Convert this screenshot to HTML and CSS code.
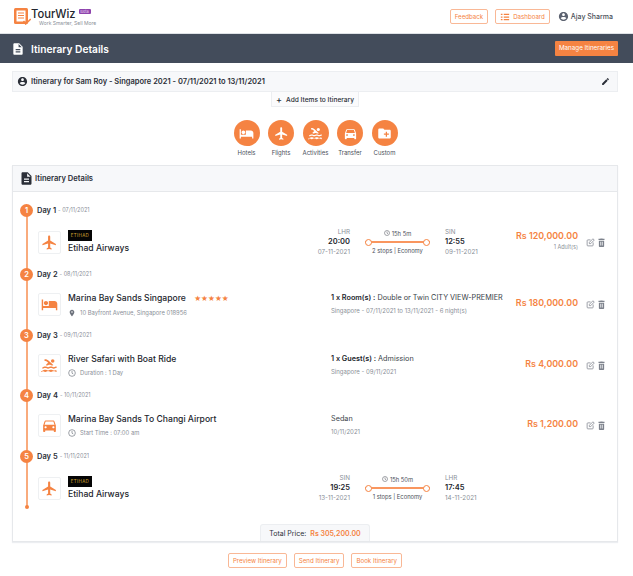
FILE: index.html
```html
<!DOCTYPE html>
<html lang="en">

<head>
  <meta charset="UTF-8" />
  <title>TourWiz - Itinerary Details</title>
  <link rel="stylesheet" href="styles.css">
</head>

<body>
  <svg class="defs" width="0" height="0">
    <symbol id="i-plane" viewBox="0 0 24 24"><path d="M21 16v-2l-8-5V3.5c0-.83-.67-1.5-1.5-1.5S10 2.67 10 3.5V9l-8 5v2l8-2.5V19l-2 1.5V22l3.5-1 3.5 1v-1.5L13 19v-5.5l8 2.5z"/></symbol>
    <symbol id="i-hotel" viewBox="0 0 24 24"><path d="M7 13c1.66 0 3-1.34 3-3S8.66 7 7 7s-3 1.34-3 3 1.34 3 3 3zm12-6h-8v7H3V5H1v15h2v-3h18v3h2v-9c0-2.21-1.79-4-4-4z"/></symbol>
    <symbol id="i-pool" viewBox="0 0 24 24"><path d="M2 21v-2c2 0 2-1 4-1s2 1 4 1 2-1 4-1 2 1 4 1 2-1 4 0v2c-2 0-2-1-4-1s-2 1-4 1-2-1-4-1-2 1-4 1-2-1-4-1-2 1-4 1zm0-4.500v-2c2 0 2-1 4-1s2 1 4 1 2-1 4-1 2 1 4 1 2-1 4-1v2c-2 0-2 1-4 1s-2-1-4-1-2 1-4 1-2-1-4-1-2 1-4 1zM8.700 12c1.500 0 2-1 3.300-1s2 1 3.300 1 1.700-.4 2.100-.6L10.500 5C8.900 3.500 7.500 3 5 3v2.500c1.800 0 2.900.4 4 1.500l1 1-3.200 3.200c.8.400 1.100.8 1.900.8z"/><circle cx="16.500" cy="5.500" r="2.500"/></symbol>
    <symbol id="i-car" viewBox="0 0 24 24"><path d="M18.920 6.010C18.720 5.420 18.160 5 17.500 5h-11c-.66 0-1.210.42-1.420 1.010L3 12v8c0 .55.45 1 1 1h1c.55 0 1-.45 1-1v-1h12v1c0 .55.45 1 1 1h1c.55 0 1-.45 1-1v-8l-2.080-5.990zM6.500 16c-.83 0-1.500-.67-1.500-1.500S5.670 13 6.500 13s1.500.67 1.500 1.500S7.330 16 6.500 16zm11 0c-.83 0-1.500-.67-1.500-1.500s.67-1.500 1.500-1.500 1.500.67 1.500 1.500-.67 1.500-1.500 1.500zM5 11l1.500-4.500h11L19 11H5z"/></symbol>
    <symbol id="i-folder" viewBox="0 0 24 24"><path d="M20 6h-8l-2-2H4c-1.100 0-2 .9-2 2v12c0 1.100.9 2 2 2h16c1.100 0 2-.9 2-2V8c0-1.100-.9-2-2-2zm-1 8h-3v3h-2v-3h-3v-2h3V9h2v3h3v2z"/></symbol>
    <symbol id="i-user" viewBox="0 0 24 24"><path d="M12 2C6.480 2 2 6.480 2 12s4.480 10 10 10 10-4.480 10-10S17.520 2 12 2zm0 3c1.660 0 3 1.340 3 3s-1.340 3-3 3-3-1.340-3-3 1.340-3 3-3zm0 14.200c-2.500 0-4.710-1.280-6-3.220.03-1.990 4-3.080 6-3.080 1.990 0 5.970 1.090 6 3.080-1.290 1.940-3.500 3.220-6 3.220z"/></symbol>
    <symbol id="i-doc" viewBox="0 0 24 24"><path d="M14 2H6c-1.100 0-1.990.9-1.990 2L4 20c0 1.100.89 2 1.990 2H18c1.100 0 2-.9 2-2V8l-6-6zm2 16H8v-2h8v2zm0-4H8v-2h8v2zm-3-5V3.500L18.500 9H13z"/></symbol>
    <symbol id="i-pencil" viewBox="0 0 24 24"><path d="M3 17.250V21h3.750L17.810 9.940l-3.750-3.750L3 17.250zM20.710 7.040c.39-.39.39-1.020 0-1.410l-2.340-2.340c-.39-.39-1.020-.39-1.410 0l-1.830 1.830 3.750 3.750 1.830-1.830z"/></symbol>
    <symbol id="i-edit" viewBox="0 0 24 24"><path d="M12 5H5a2 2 0 0 0-2 2v12a2 2 0 0 0 2 2h12a2 2 0 0 0 2-2v-7" fill="none" stroke="currentColor" stroke-width="2"/><path d="M9 15v-3.500L18.500 2 22 5.500 12.500 15z" fill="none" stroke="currentColor" stroke-width="2"/></symbol>
    <symbol id="i-trash" viewBox="0 0 24 24"><path d="M5 22c0 1.100.9 2 2 2h10c1.100 0 2-.9 2-2V7H5v15zm4-12h2v10H9V10zm4 0h2v10h-2V10zM20 2h-4.500l-1-1h-5l-1 1H4v3h16V2z"/></symbol>
    <symbol id="i-pin" viewBox="0 0 24 24"><path d="M12 2C8.130 2 5 5.130 5 9c0 5.250 7 13 7 13s7-7.750 7-13c0-3.870-3.130-7-7-7zm0 9.500c-1.380 0-2.500-1.120-2.500-2.500s1.120-2.500 2.500-2.500 2.500 1.120 2.500 2.500-1.120 2.500-2.500 2.500z"/></symbol>
    <symbol id="i-clock" viewBox="0 0 24 24"><circle cx="12" cy="12" r="10" fill="none" stroke="currentColor" stroke-width="2"/><path d="M12 6v6.500l4 2.500" fill="none" stroke="currentColor" stroke-width="2"/></symbol>
    <symbol id="i-list" viewBox="0 0 24 24"><path d="M2 4h4v3H2zM9 4h13v3H9zM2 10.500h4v3H2zM9 10.500h13v3H9zM2 17h4v3H2zM9 17h13v3H9z"/></symbol>
  </svg>

  <header class="topbar">
    <div class="brand">
      <svg class="brand-logo" viewBox="0 0 17 17">
        <rect x="0" y="0" width="14" height="16" rx="1.500" fill="#f58342"/>
        <path d="M2.500 2.500h9v11h-9z" fill="#fff"/>
        <path d="M4 5h6M4 7.500h6M4 10h6" stroke="#f58342" stroke-width="1.200"/>
        <path d="M9.500 13l2.200 3 5-5" fill="none" stroke="#f58342" stroke-width="1.500"/>
      </svg>
      <div class="brand-text">
        <div class="brand-name">TourWiz <span class="beta">Beta</span></div>
        <div class="brand-tag">Work Smarter, Sell More</div>
      </div>
    </div>
    <div class="topbar-right">
      <a class="btn-outline btn-top">Feedback</a>
      <a class="btn-outline btn-top btn-dash"><svg class="ic-list"><use href="#i-list"/></svg>Dashboard</a>
      <div class="user"><svg class="ic-user"><use href="#i-user"/></svg>Ajay Sharma</div>
    </div>
  </header>

  <div class="pagebar">
    <div class="pagebar-title"><svg class="ic-page"><use href="#i-doc"/></svg>Itinerary Details</div>
    <a class="btn-manage">Manage Itineraries</a>
  </div>

  <main class="content">
    <div class="title-bar">
      <div class="title-left"><svg class="ic-title"><use href="#i-user"/></svg>Itinerary for Sam Roy - Singapore 2021 - 07/11/2021 to 13/11/2021</div>
      <svg class="ic-pencil"><use href="#i-pencil"/></svg>
    </div>
    <div class="add-wrap"><a class="add-btn"><span class="plus">+</span>Add Items to Itinerary</a></div>

    <div class="types">
      <div class="type"><span class="type-circle"><svg><use href="#i-hotel"/></svg></span>Hotels</div>
      <div class="type"><span class="type-circle"><svg><use href="#i-plane"/></svg></span>Flights</div>
      <div class="type"><span class="type-circle"><svg><use href="#i-pool"/></svg></span>Activities</div>
      <div class="type"><span class="type-circle"><svg><use href="#i-car"/></svg></span>Transfer</div>
      <div class="type"><span class="type-circle"><svg><use href="#i-folder"/></svg></span>Custom</div>
    </div>

    <section class="card">
      <div class="card-head"><svg class="ic-head"><use href="#i-doc"/></svg>Itinerary Details</div>

      <div class="timeline">
        <div class="day day-flight">
          <div class="day-head"><span class="num">1</span><b>Day 1</b><span class="day-date">- 07/11/2021</span></div>
          <div class="item item-flight">
            <span class="item-icon"><svg><use href="#i-plane"/></svg></span>
            <div class="info">
              <div class="airline-logo">ETIHAD</div>
              <div class="item-title">Etihad Airways</div>
            </div>
            <div class="flight">
              <div class="leg leg-from"><span class="code">LHR</span><b>20:00</b><span class="code">07-11-2021</span></div>
              <div class="route">
                <span class="dur"><svg class="ic-dur"><use href="#i-clock"/></svg>15h 5m</span>
                <span class="line"></span>
                <span class="stops">2 stops | Economy</span>
              </div>
              <div class="leg"><span class="code">SIN</span><b>12:55</b><span class="code">09-11-2021</span></div>
            </div>
            <div class="price">Rs 120,000.00<small>1 Adult(s)</small></div>
            <div class="actions"><svg><use href="#i-edit"/></svg><svg><use href="#i-trash"/></svg></div>
          </div>
        </div>

        <div class="day">
          <div class="day-head"><span class="num">2</span><b>Day 2</b><span class="day-date">- 08/11/2021</span></div>
          <div class="item">
            <span class="item-icon"><svg><use href="#i-hotel"/></svg></span>
            <div class="info">
              <div class="item-title">Marina Bay Sands Singapore <span class="stars">★★★★★</span></div>
              <div class="item-sub"><svg class="ic-sub"><use href="#i-pin"/></svg>10 Bayfront Avenue, Singapore 018956</div>
            </div>
            <div class="detail">
              <div class="detail-main"><b>1 x Room(s) :</b> Double or Twin CITY VIEW-PREMIER</div>
              <div class="detail-sub">Singapore - 07/11/2021 to 13/11/2021 - 6 night(s)</div>
            </div>
            <div class="price">Rs 180,000.00</div>
            <div class="actions"><svg><use href="#i-edit"/></svg><svg><use href="#i-trash"/></svg></div>
          </div>
        </div>

        <div class="day day-short">
          <div class="day-head"><span class="num">3</span><b>Day 3</b><span class="day-date">- 09/11/2021</span></div>
          <div class="item">
            <span class="item-icon"><svg><use href="#i-pool"/></svg></span>
            <div class="info">
              <div class="item-title">River Safari with Boat Ride</div>
              <div class="item-sub"><svg class="ic-sub"><use href="#i-clock"/></svg>Duration : 1 Day</div>
            </div>
            <div class="detail">
              <div class="detail-main"><b>1 x Guest(s) :</b> Admission</div>
              <div class="detail-sub">Singapore - 09/11/2021</div>
            </div>
            <div class="price">Rs 4,000.00</div>
            <div class="actions"><svg><use href="#i-edit"/></svg><svg><use href="#i-trash"/></svg></div>
          </div>
        </div>

        <div class="day">
          <div class="day-head"><span class="num">4</span><b>Day 4</b><span class="day-date">- 10/11/2021</span></div>
          <div class="item">
            <span class="item-icon"><svg><use href="#i-car"/></svg></span>
            <div class="info">
              <div class="item-title">Marina Bay Sands To Changi Airport</div>
              <div class="item-sub"><svg class="ic-sub"><use href="#i-clock"/></svg>Start Time : 07:00 am</div>
            </div>
            <div class="detail">
              <div class="detail-main">Sedan</div>
              <div class="detail-sub">10/11/2021</div>
            </div>
            <div class="price">Rs 1,200.00</div>
            <div class="actions"><svg><use href="#i-edit"/></svg><svg><use href="#i-trash"/></svg></div>
          </div>
        </div>

        <div class="day day-flight">
          <div class="day-head"><span class="num">5</span><b>Day 5</b><span class="day-date">- 11/11/2021</span></div>
          <div class="item item-flight">
            <span class="item-icon"><svg><use href="#i-plane"/></svg></span>
            <div class="info">
              <div class="airline-logo">ETIHAD</div>
              <div class="item-title">Etihad Airways</div>
            </div>
            <div class="flight">
              <div class="leg leg-from"><span class="code">SIN</span><b>19:25</b><span class="code">13-11-2021</span></div>
              <div class="route">
                <span class="dur"><svg class="ic-dur"><use href="#i-clock"/></svg>15h 50m</span>
                <span class="line"></span>
                <span class="stops">1 stops | Economy</span>
              </div>
              <div class="leg"><span class="code">LHR</span><b>17:45</b><span class="code">14-11-2021</span></div>
            </div>
            <div class="price"></div>
            <div class="actions"></div>
          </div>
        </div>
      </div>

      <div class="total-wrap">
        <div class="total">Total Price: <b>Rs 305,200.00</b></div>
      </div>
    </section>

    <div class="footer-btns">
      <a class="btn-outline">Preview Itinerary</a>
      <a class="btn-outline">Send Itinerary</a>
      <a class="btn-outline">Book Itinerary</a>
    </div>
  </main>
</body>

</html>
```

FILE: styles.css
```css
* {
  box-sizing: border-box;
}

body {
  margin: 0;
  background: #fff;
  color: #2b2f38;
  font-family: Inter, "Liberation Sans", sans-serif;
  font-size: 8px;
  overflow: hidden;
}

b {
  font-weight: 600;
}

svg {
  fill: currentColor;
  display: block;
  flex: none;
}

.defs {
  position: absolute;
}

/* top bar */
.topbar {
  height: 34px;
  display: flex;
  justify-content: space-between;
  align-items: flex-start;
  padding: 8px 20px 0 14px;
  border-bottom: 1px solid #dfe2e6;
}

.brand {
  display: flex;
  align-items: flex-start;
}

.brand-logo {
  width: 17px;
  height: 17px;
}

.brand-name {
  font-size: 11.200px;
  font-weight: 500;
  line-height: 12px;
  color: #23262d;
}

.beta {
  display: inline-block;
  vertical-align: 5px;
  background: #8e44ad;
  color: #e8d7f0;
  font-size: 4px;
  line-height: 5px;
  width: 12px;
  text-align: center;
  border-radius: 1px;
  font-weight: 400;
}

.brand-tag {
  font-size: 5px;
  line-height: 6px;
  color: #8a8f98;
  margin-left: 8px;
}

.topbar-right {
  display: flex;
  align-items: center;
  padding-top: 1px;
}

.btn-outline {
  display: inline-flex;
  align-items: center;
  height: 15px;
  padding: 0 4px;
  border: 1px solid #f9b896;
  border-radius: 2px;
  color: #f58342;
  font-size: 6.150px;
  background: #fff;
  white-space: nowrap;
}

.btn-top {
  margin-right: 7px;
}

.btn-dash {
  margin-right: 8px;
}

.ic-list {
  width: 10px;
  height: 10px;
  margin-right: 3px;
}

.user {
  display: flex;
  align-items: center;
  font-size: 7px;
  font-weight: 500;
  color: #4a4f59;
}

.ic-user {
  width: 11px;
  height: 11px;
  margin-right: 2px;
  color: #5c6270;
}

/* dark page bar */
.pagebar {
  height: 29px;
  background: #434c5b;
  display: flex;
  justify-content: space-between;
  align-items: center;
  padding: 0 15px 0 11px;
  color: #fff;
}

.pagebar-title {
  display: flex;
  align-items: center;
  font-size: 10.200px;
  font-weight: 600;
}

.ic-page {
  width: 14px;
  height: 14px;
  margin-right: 6px;
}

.btn-manage {
  background: #f58342;
  color: #fff;
  font-size: 6.250px;
  height: 15px;
  line-height: 15px;
  padding: 0 4px;
  border-radius: 1px;
}

.content {
  padding: 8px 15px 0 12px;
}

/* itinerary title */
.title-bar {
  height: 21px;
  background: #f7f8fa;
  border: 1px solid #eceef1;
  display: flex;
  justify-content: space-between;
  align-items: center;
  padding: 0 7px 0 4px;
}

.title-left {
  display: flex;
  align-items: center;
  font-size: 7.500px;
  font-weight: 600;
}

.ic-title {
  width: 11px;
  height: 11px;
  margin-right: 3px;
}

.ic-pencil {
  width: 9px;
  height: 9px;
}

.add-wrap {
  display: flex;
  justify-content: center;
}

.add-btn {
  display: flex;
  align-items: center;
  height: 15px;
  padding: 1px 4px 0;
  background: #fbfbfc;
  border: 1px solid #eceef1;
  border-top: 0;
  font-size: 6.600px;
  font-weight: 500;
}

.plus {
  font-size: 9px;
  margin-right: 4px;
}

/* add item types */
.types {
  display: flex;
  justify-content: center;
  gap: 8px;
  margin-top: 13px;
  margin-left: 1px;
}

.type {
  width: 26.500px;
  display: flex;
  flex-direction: column;
  align-items: center;
  font-size: 6px;
  line-height: 8px;
  color: #4a4f59;
  white-space: nowrap;
}

.type-circle {
  width: 26px;
  height: 26px;
  border-radius: 50%;
  background: #f58342;
  color: #fff;
  display: flex;
  align-items: center;
  justify-content: center;
  margin-bottom: 3px;
}

.type-circle svg {
  width: 15px;
  height: 15px;
}

/* details card */
.card {
  margin-top: 8px;
  height: 377px;
  border: 1px solid #e6e8eb;
  box-shadow: 0 1px 1px #eceef1;
  display: flex;
  flex-direction: column;
}

.card-head {
  height: 26px;
  flex: none;
  background: #f7f8fa;
  border-bottom: 1px solid #e6e8eb;
  display: flex;
  align-items: center;
  padding-left: 5.500px;
  font-size: 7.600px;
  font-weight: 600;
}

.ic-head {
  width: 15px;
  height: 15px;
  margin-right: 1.500px;
}

.timeline {
  position: relative;
  padding: 11px 11px 0 7px;
  height: 325px;
  flex: none;
}

.timeline::before {
  content: "";
  position: absolute;
  left: 13px;
  top: 18px;
  bottom: 10px;
  width: 2px;
  background: #f9ab7d;
}

.timeline::after {
  content: "";
  position: absolute;
  left: 12px;
  bottom: 8px;
  width: 4px;
  height: 4px;
  border-radius: 50%;
  background: #f58342;
}

.day {
  height: 61px;
}

.day-flight {
  height: 64px;
}

.day-short {
  height: 60px;
}

.day-head {
  position: relative;
  display: flex;
  align-items: center;
  height: 14px;
  font-size: 7.500px;
}

.num {
  width: 13px;
  height: 13px;
  border-radius: 50%;
  background: #f58342;
  color: #fff;
  font-weight: 600;
  font-size: 7.500px;
  display: flex;
  align-items: center;
  justify-content: center;
  margin-right: 4px;
}

.day-date {
  margin-left: 2px;
  font-size: 5.500px;
  color: #8a8f98;
}

.item {
  display: flex;
  align-items: center;
  height: 32px;
  margin-top: 7px;
  padding-left: 18px;
}

.item-flight {
  height: 36px;
}

.item-icon {
  width: 23px;
  height: 23px;
  flex: none;
  background: #fff;
  border: 1px solid #eef0f2;
  border-radius: 2px;
  color: #f58342;
  display: flex;
  align-items: center;
  justify-content: center;
  margin-right: 7px;
}

.item-icon svg {
  width: 17px;
  height: 17px;
}

.info {
  flex: 1;
  min-width: 0;
}

.airline-logo {
  width: 24px;
  height: 11px;
  margin-bottom: 1px;
  background: #050505;
  color: #d9a933;
  font-size: 4.500px;
  line-height: 11px;
  letter-spacing: 0.300px;
  text-align: center;
  overflow: hidden;
}

.item-title {
  font-size: 8.600px;
  font-weight: 500;
  line-height: 12px;
  color: #23262d;
  white-space: nowrap;
}

.stars {
  font-size: 7.700px;
  color: #f58342;
  margin-left: 6px;
  font-family: "DejaVu Sans", sans-serif;
}

.item-sub {
  display: flex;
  align-items: center;
  margin-top: 4px;
  font-size: 5.850px;
  line-height: 8px;
  color: #8a8f98;
  white-space: nowrap;
}

.ic-sub {
  width: 8px;
  height: 8px;
  margin-right: 4px;
  color: #6d727c;
}

/* flight block */
.flight {
  width: 191px;
  flex: none;
  display: flex;
  align-items: center;
}

.leg {
  display: flex;
  flex-direction: column;
  width: 56px;
  margin-left: 15px;
  line-height: 10px;
}

.leg-from {
  width: 40px;
  margin-left: 0;
  text-align: right;
}

.leg b {
  font-size: 7.500px;
  color: #23262d;
}

.code {
  font-size: 6.300px;
  color: #8a8f98;
}

.route {
  width: 65px;
  flex: none;
  margin-left: 15px;
  display: flex;
  flex-direction: column;
  align-items: center;
  font-size: 5.800px;
  color: #4a4f59;
}

.dur {
  display: flex;
  align-items: center;
  height: 8px;
}

.ic-dur {
  width: 6px;
  height: 6px;
  margin-right: 2px;
}

.line {
  position: relative;
  width: 100%;
  height: 1.500px;
  background: #f9965f;
  margin: 4px 0;
}

.line::before,
.line::after {
  content: "";
  position: absolute;
  top: -2px;
  width: 5px;
  height: 5px;
  border-radius: 50%;
  background: #fff;
  border: 1px solid #f58342;
}

.line::before {
  left: 0;
}

.line::after {
  right: 0;
}

.stops {
  line-height: 8px;
}

/* non flight detail */
.detail {
  width: 170px;
  flex: none;
  white-space: nowrap;
}

.detail-main {
  font-size: 7.250px;
  line-height: 10px;
  color: #3a3f49;
}

.detail-main b {
  color: #23262d;
}

.detail-sub {
  margin-top: 4px;
  font-size: 6px;
  line-height: 8px;
  color: #8a8f98;
}

.price {
  width: 77px;
  flex: none;
  padding-bottom: 3px;
  text-align: right;
  color: #f58342;
  font-size: 8.900px;
  font-weight: 600;
  white-space: nowrap;
}

.price small {
  display: block;
  font-size: 5.500px;
  font-weight: 400;
  color: #8a8f98;
  line-height: 8px;
  margin-top: 2px;
}

.actions {
  width: 20px;
  margin-left: 8px;
  flex: none;
  display: flex;
  justify-content: space-between;
  color: #7d828c;
}

.actions svg {
  width: 9px;
  height: 9px;
}

/* total + footer */
.total-wrap {
  margin-top: auto;
  display: flex;
  justify-content: center;
}

.total {
  height: 17px;
  line-height: 17px;
  padding: 0 8px;
  background: #f7f8fa;
  border: 1px solid #eceef1;
  border-bottom: 0;
  border-radius: 3px 3px 0 0;
  font-size: 7px;
}

.total b {
  color: #f58342;
  margin-left: 2px;
}

.footer-btns {
  display: flex;
  justify-content: center;
  gap: 7px;
  margin-top: 11px;
}
```
